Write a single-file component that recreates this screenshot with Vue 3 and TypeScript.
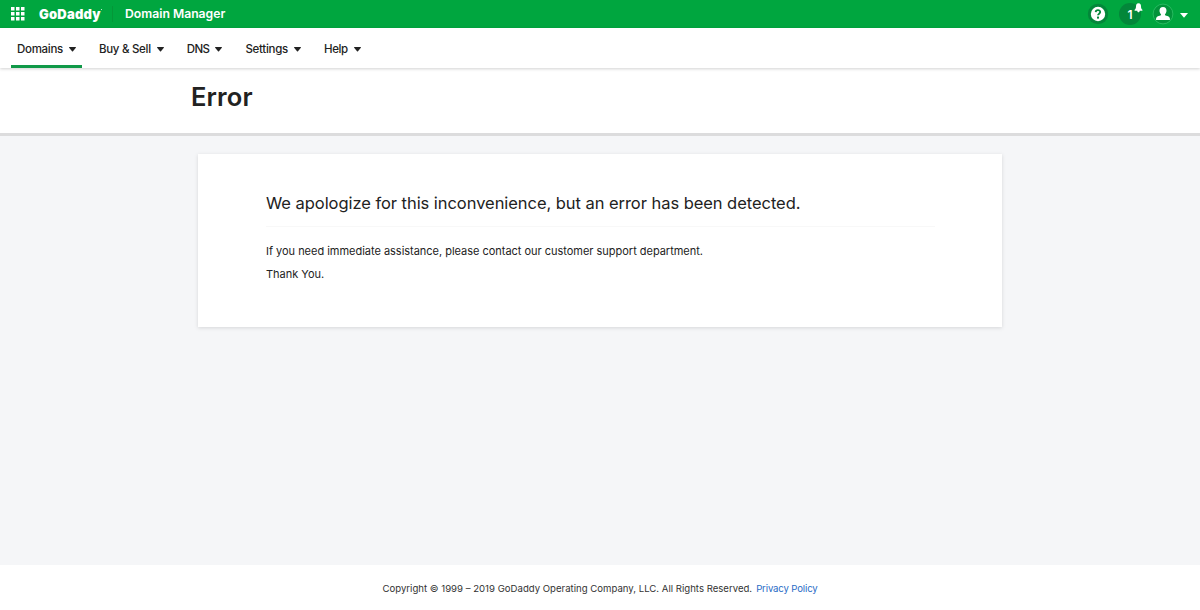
<script setup lang="ts">
interface NavItem {
  label: string
  key: string
  active?: boolean
}

const navItems: NavItem[] = [
  { label: 'Domains', key: 'domains', active: true },
  { label: 'Buy & Sell', key: 'buy' },
  { label: 'DNS', key: 'dns' },
  { label: 'Settings', key: 'settings' },
  { label: 'Help', key: 'help' },
]

const gridSteps: number[] = [0, 5, 10]
</script>

<template>
  <div class="page">
    <header class="topbar">
      <svg class="apps" width="14" height="14" viewBox="0 0 14 14" aria-hidden="true">
        <template v-for="y in gridSteps" :key="y">
          <rect v-for="x in gridSteps" :key="x" :x="x" :y="y" width="3.5" height="3.5" fill="#fff" />
        </template>
      </svg>
      <span class="logo">GoDaddy</span>
      <span class="reg"></span>
      <span class="divider"></span>
      <span class="product">Domain Manager</span>
      <div class="tools">
        <svg width="22" height="22" viewBox="0 0 22 22" aria-hidden="true">
          <circle cx="11" cy="11" r="10.2" fill="#03873a" />
          <circle cx="11" cy="11" r="7.2" fill="#fff" />
          <path d="M8.7 9.1C8.8 6.4 13.3 6.5 13.2 9.1C13.2 10.7 11 10.6 11 12.3" fill="none" stroke="#03873a" stroke-width="1.8" />
          <rect x="10" y="13.6" width="2" height="2" fill="#03873a" />
        </svg>
        <div class="alerts">
          <span class="count">1</span>
          <svg class="bell" width="9" height="10" viewBox="0 0 9 10" aria-hidden="true">
            <path d="M4.5 0.3C6.5 0.5 7 1.8 7 3.5C7 5.2 7.5 5.9 8.4 6.8V7.7H0.6V6.8C1.5 5.9 2 5.2 2 3.5C2 1.8 2.5 0.5 4.5 0.3ZM3.3 7.7H5.7C5.6 9.8 3.4 9.8 3.3 7.7Z" fill="#fff" />
          </svg>
        </div>
        <svg width="22" height="22" viewBox="0 0 22 22" aria-hidden="true">
          <circle cx="11" cy="11" r="9.9" fill="#03933b" stroke="#30c168" stroke-width="0.8" />
          <path d="M11 3.9C13.4 3.9 14.5 5.5 14.5 7.7C14.5 9.2 13.7 10.5 12.9 11.4C12.9 12.4 13.8 12.6 15.4 13C17.2 13.5 18 14.4 18 17H4C4 14.4 4.8 13.5 6.6 13C8.2 12.6 9.1 12.4 9.1 11.4C8.3 10.5 7.5 9.2 7.5 7.7C7.5 5.5 8.6 3.9 11 3.9Z" fill="#fff" />
        </svg>
        <svg class="menu-caret" width="8" height="5" viewBox="0 0 8 5" aria-hidden="true"><path d="M0 0H8L4 4.8Z" fill="#fff" /></svg>
      </div>
    </header>

    <nav class="nav">
      <a v-for="item in navItems" :key="item.key" class="nav-item" :class="[item.key, { active: item.active }]">
        <span class="label">{{ item.label }}</span>
        <svg width="7" height="5" viewBox="0 0 7 5" aria-hidden="true"><path d="M0.5 0H6.5Q7.3 0 6.8 0.7L4 4.3Q3.5 4.9 3 4.3L0.2 0.7Q-0.3 0 0.5 0Z" fill="#222" /></svg>
      </a>
    </nav>

    <section class="title"><h1>Error</h1></section>

    <main class="content">
      <article class="card">
        <h2>We apologize for this inconvenience, but an error has been detected.</h2>
        <p>If you need immediate assistance, please contact our customer support department.</p>
        <p>Thank You.</p>
      </article>
    </main>

    <footer class="footer">
      <span>Copyright © 1999 – 2019 GoDaddy Operating Company, LLC. All Rights Reserved.</span>
      <a class="privacy">Privacy Policy</a>
    </footer>
  </div>
</template>

<style>
body {
  margin: 0;
  overflow: hidden;
}
</style>

<style scoped>
.page {
  display: flex;
  flex-direction: column;
  height: 610px;
  background: #fff;
  color: #222;
  font-family: Inter, "Liberation Sans", sans-serif;
  white-space: nowrap;
}
.topbar {
  display: flex;
  flex: none;
  align-items: center;
  height: 28px;
  box-sizing: border-box;
  padding: 0 12px 0 11px;
  background: #00a63f;
  color: #fff;
}
.apps { flex: none; }
.logo {
  width: 62px;
  margin-left: 14px;
  font-size: 13px;
  font-weight: 900;
  line-height: 28px;
  letter-spacing: 0.2px;
}
.reg {
  width: 1px;
  height: 1px;
  margin: -10px 0 0;
  background: #b8e8c9;
}
.divider {
  width: 1px;
  height: 16px;
  margin-left: 10px;
  background: #049738;
}
.product {
  margin-left: 12px;
  font-size: 12.2px;
  font-weight: 600;
  line-height: 28px;
}
.tools {
  display: flex;
  align-items: center;
  height: 28px;
  margin-left: auto;
}
.alerts {
  position: relative;
  width: 22px;
  height: 22px;
  margin: 0 11px 0 10px;
  border-radius: 50%;
  background: #03873a;
}
.count {
  display: block;
  text-align: center;
  font-size: 12px;
  font-weight: 600;
  line-height: 23px;
}
.bell {
  position: absolute;
  top: 0;
  right: -2px;
}
.menu-caret { margin: 3px 0 0 6px; }
.nav {
  position: relative;
  display: flex;
  flex: none;
  gap: 11px;
  height: 40px;
  padding-left: 11px;
  background: #fff;
  box-shadow: 0 1px 3px rgba(0, 0, 0, 0.18);
}
.nav-item {
  display: flex;
  align-items: center;
  gap: 6px;
  height: 37px;
  padding: 0 6px;
  border-bottom: 3px solid transparent;
  font-size: 11.5px;
  font-weight: 500;
  letter-spacing: -0.29px;
}
.nav-item svg { margin-top: 6px; }
.label {
  padding-top: 4px;
  line-height: 40px;
}
.dns .label { letter-spacing: -0.6px; }
.help .label { letter-spacing: -0.35px; }
.active { border-bottom-color: #109948; }
.title {
  flex: none;
  height: 65px;
  border-bottom: 3px solid #dcdcdd;
}
h1 {
  margin: 0;
  padding-left: 191px;
  font-size: 25.5px;
  font-weight: 600;
  line-height: 58px;
  letter-spacing: 0.15px;
}
.content {
  flex: 1;
  padding: 18px 198px 0;
  background: #f5f6f8;
}
.card {
  box-sizing: border-box;
  height: 173px;
  padding: 32px 67px 0 68px;
  background: #fff;
  box-shadow: 0 1px 4px rgba(0, 0, 0, 0.13);
}
h2 {
  height: 40px;
  margin: 0 0 13px;
  border-bottom: 1px solid #f8f8f8;
  font-size: 16.5px;
  font-weight: 400;
  line-height: 35px;
  letter-spacing: -0.05px;
}
p {
  margin: 0;
  font-size: 11px;
  line-height: 23px;
  letter-spacing: -0.02px;
}
.footer {
  display: flex;
  flex: none;
  justify-content: center;
  gap: 4px;
  height: 45px;
  font-size: 9.6px;
  line-height: 47px;
  color: #333;
}
.privacy {
  color: #296cc6;
  letter-spacing: -0.15px;
}
</style>
